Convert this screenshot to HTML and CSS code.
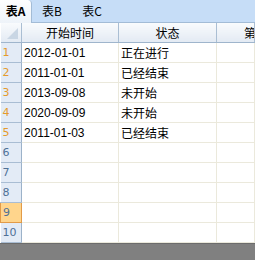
FILE: index.html
```html
<!DOCTYPE html>
<html lang="zh">
<head>
  <meta charset="UTF-8">
  <title>表格</title>
  <link rel="stylesheet" href="styles.css">
</head>
<body>

<div class="sheet">
  <div class="tabs">
    <div class="tab active">表A</div>
    <div class="tab">表B</div>
    <div class="tab">表C</div>
  </div>

  <table class="grid">
    <colgroup>
      <col class="c-num">
      <col class="c-date">
      <col class="c-state">
      <col>
    </colgroup>
    <thead>
      <tr>
        <th class="corner"><span class="tri"></span></th>
        <th>开始时间</th>
        <th>状态</th>
        <th class="cut">第</th>
      </tr>
    </thead>
    <tbody>
      <tr><td class="num used">1</td><td>2012-01-01</td><td>正在进行</td><td></td></tr>
      <tr><td class="num used">2</td><td>2011-01-01</td><td>已经结束</td><td></td></tr>
      <tr><td class="num used">3</td><td>2013-09-08</td><td>未开始</td><td></td></tr>
      <tr><td class="num used">4</td><td>2020-09-09</td><td>未开始</td><td></td></tr>
      <tr><td class="num used">5</td><td>2011-01-03</td><td>已经结束</td><td></td></tr>
      <tr><td class="num">6</td><td></td><td></td><td></td></tr>
      <tr><td class="num">7</td><td></td><td></td><td></td></tr>
      <tr><td class="num">8</td><td></td><td></td><td></td></tr>
      <tr><td class="num sel">9</td><td></td><td></td><td></td></tr>
      <tr><td class="num">10</td><td></td><td></td><td></td></tr>
    </tbody>
  </table>

  <div class="bottom"></div>
</div>

</body>
</html>
```

FILE: styles.css
```css
body {
  margin: 0;
  background-color: #808080;
  font-family: "Liberation Sans", "Noto Sans CJK SC", sans-serif;
  font-size: 12px;
}

.sheet {
  width: 255px;
  overflow: hidden;
}

.tabs {
  display: flex;
  height: 22px;
  background-color: #c6ddf7;
  border-bottom: 1px solid #a3bcd6;
}

.tab {
  width: 40px;
  line-height: 22px;
  text-align: center;
  color: #000;
  font-family: "Noto Sans CJK SC", sans-serif;
}

.tab.active {
  width: 31px;
  background: linear-gradient(#fdfeff, #eef3f9);
  border-right: 1px solid #a3bcd6;
  border-top-right-radius: 4px;
  font-weight: bold;
  margin-bottom: -1px;
  height: 23px;
}

.grid {
  width: 255px;
  table-layout: fixed;
  border-collapse: collapse;
  background-color: #fff;
}

.c-num { width: 21px; }
.c-date { width: 97px; }
.c-state { width: 98px; }

.grid th {
  height: 19px;
  padding: 0;
  font-weight: normal;
  font-family: "Noto Sans CJK SC", sans-serif;
  background: linear-gradient(#f9fbfd, #e3eaf3);
  border-right: 1px solid #aabed3;
  border-bottom: 1px solid #9fb5cc;
  white-space: nowrap;
  overflow: hidden;
}

.grid th.cut {
  text-align: left;
  padding-left: 27px;
}

.corner {
  position: relative;
}

.tri {
  position: absolute;
  right: 3px;
  bottom: 3px;
  width: 0;
  height: 0;
  border-left: 11px solid transparent;
  border-bottom: 11px solid #c9d6e4;
}

.grid td {
  height: 19px;
  padding: 0 0 0 2px;
  border-right: 1px solid #ebe9dc;
  border-bottom: 1px solid #ebe9dc;
  white-space: nowrap;
  overflow: hidden;
  color: #000;
}

.grid td.num {
  padding: 0 0 0 2px;
  background-color: #e3ebf6;
  border-right: 1px solid #9cb2c9;
  border-bottom: 1px solid #a9bdd3;
  color: #4f7196;
  font-family: "DejaVu Sans", sans-serif;
  font-size: 11px;
}

.grid td.num.used {
  color: #e59a2c;
}

.grid td.num.sel {
  background-color: #ffd58c;
  border: 1px solid #e29b48;
}

.bottom {
  height: 16px;
  border-top: 1px solid #6c6c6c;
  background-color: #808080;
}
```
